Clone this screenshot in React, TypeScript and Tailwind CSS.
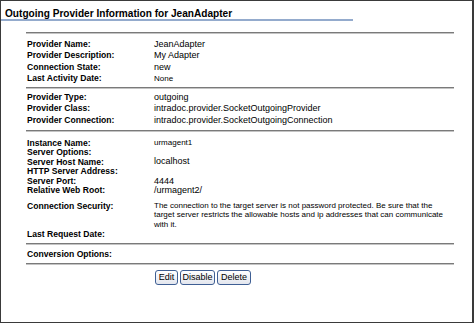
const font = 'font-["Liberation_Sans",Arial,sans-serif]'

type Row = { label: string; value?: string; small?: boolean; h: string }

const Rule = ({ className = '' }: { className?: string }) => (
  <div className={`h-[2px] border-t border-[#7a7a7a] bg-[#c4c4c4] ${className}`} />
)

const Rows = ({ rows }: { rows: Row[] }) => (
  <div className="flex flex-col">
    {rows.map((r) => (
      <div key={r.label} className={`flex items-center ${r.h}`}>
        <div className="w-[128px] pl-[1px] text-[8.6px] font-bold leading-none">{r.label}</div>
        <div className={`${r.small ? 'text-[8px]' : 'text-[9px]'} leading-none`}>{r.value}</div>
      </div>
    ))}
  </div>
)

const XpButton = ({ label, w }: { label: string; w: string }) => (
  <button
    className={`${w} flex h-[15px] items-center justify-center rounded-[3px] border border-[#3f5f94] bg-gradient-to-b from-white to-[#e3e6ee] text-[9px] leading-none text-black`}
  >
    {label}
  </button>
)

export default function App() {
  return (
    <div className={`${font} h-[323px] w-[474px] border border-r-2 border-[#3a3a3a] bg-white text-black`}>
      <div className="h-[18px] pl-[4px] pt-[7.5px] text-[10.1px] font-bold leading-none">
        Outgoing Provider Information for JeanAdapter
      </div>
      <div className="h-[2px] w-[352px] bg-[#94abcd]" />

      <div className="ml-[25px] mt-[11px] w-[428px]">
        <Rule />
        <div className="pt-[4.5px] pb-[2.5px]">
          <Rows
            rows={[
              { label: 'Provider Name:', value: 'JeanAdapter', h: 'h-[11.5px]' },
              { label: 'Provider Description:', value: 'My Adapter', h: 'h-[11.5px]' },
              { label: 'Connection State:', value: 'new', h: 'h-[11.5px]' },
              { label: 'Last Activity Date:', value: 'None', small: true, h: 'h-[11.5px]' },
            ]}
          />
        </div>
        <Rule />
        <div className="pt-[2.5px] pb-[4px]">
          <Rows
            rows={[
              { label: 'Provider Type:', value: 'outgoing', h: 'h-[11.5px]' },
              { label: 'Provider Class:', value: 'intradoc.provider.SocketOutgoingProvider', h: 'h-[11.5px]' },
              { label: 'Provider Connection:', value: 'intradoc.provider.SocketOutgoingConnection', h: 'h-[11.5px]' },
            ]}
          />
        </div>
        <Rule />
        <div className="pt-[6px] pb-[4px]">
          <Rows
            rows={[
              { label: 'Instance Name:', value: 'urmagent1', small: true, h: 'h-[9.6px]' },
              { label: 'Server Options:', h: 'h-[9.6px]' },
              { label: 'Server Host Name:', value: 'localhost', h: 'h-[9.6px]' },
              { label: 'HTTP Server Address:', h: 'h-[9.6px]' },
              { label: 'Server Port:', value: '4444', h: 'h-[9.6px]' },
              { label: 'Relative Web Root:', value: '/urmagent2/', h: 'h-[9.6px]' },
            ]}
          />
          <div className="mt-[5px] flex">
            <div className="w-[128px] pl-[1px] pt-[1px] text-[8.6px] font-bold leading-[9.5px]">Connection Security:</div>
            <div className="w-[298px] text-[8px] leading-[9.5px]">
              The connection to the target server is not password protected. Be sure that the target server restricts
              the allowable hosts and ip addresses that can communicate with it.
            </div>
          </div>
          <Rows rows={[{ label: 'Last Request Date:', h: 'h-[9.6px]' }]} />
        </div>
        <Rule />
        <div className="pt-[4px] pb-[3px]">
          <Rows rows={[{ label: 'Conversion Options:', h: 'h-[11.5px]' }]} />
        </div>
        <Rule />
        <div className="mt-[5px] flex gap-[2px] pl-[129px]">
          <XpButton label="Edit" w="w-[23px]" />
          <XpButton label="Disable" w="w-[35px]" />
          <XpButton label="Delete" w="w-[34px]" />
        </div>
      </div>
    </div>
  )
}
